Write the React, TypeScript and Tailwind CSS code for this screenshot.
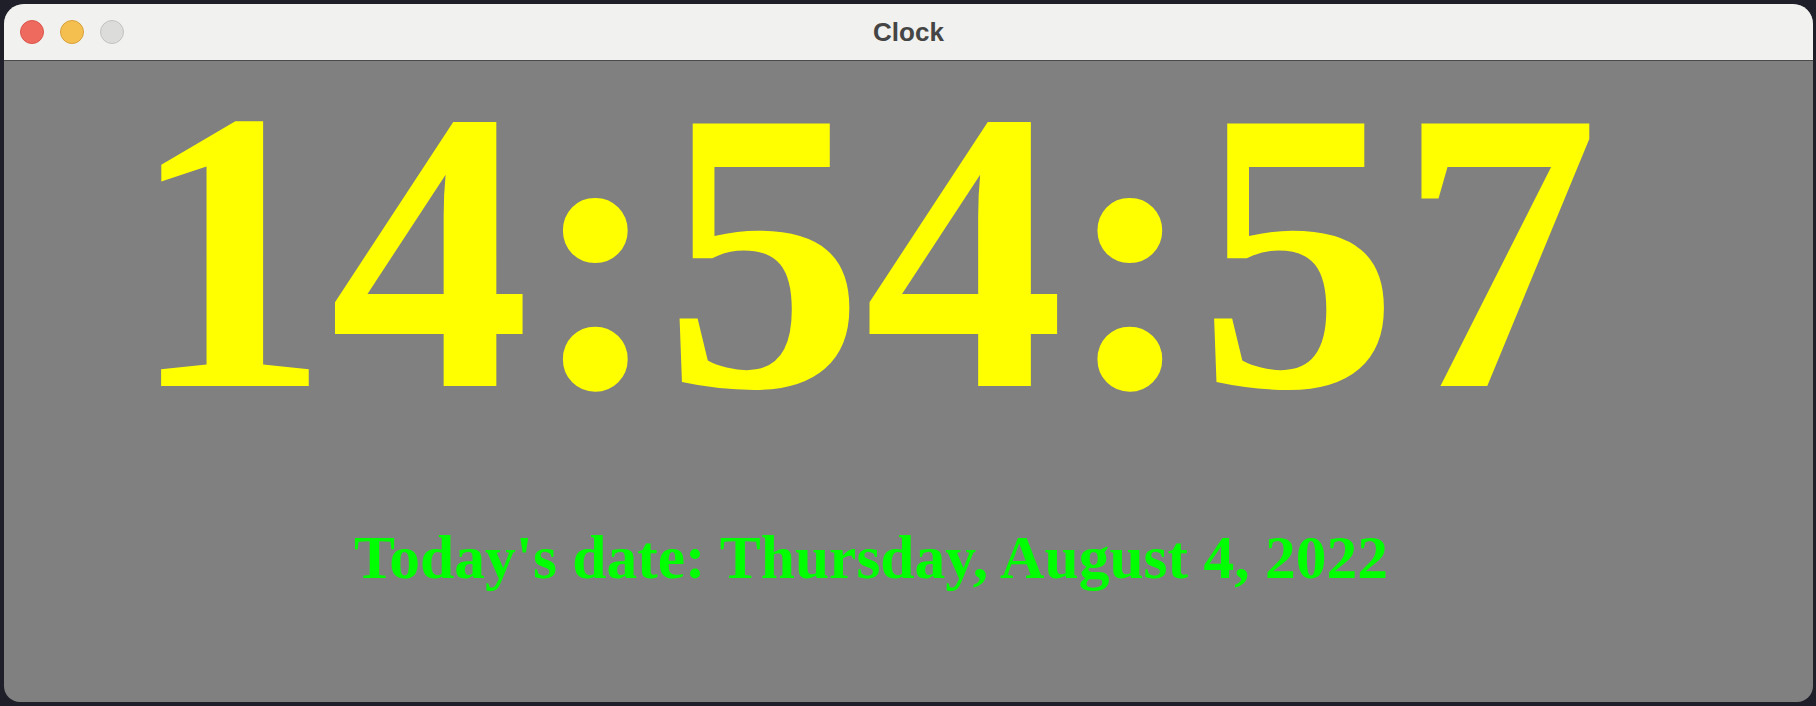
import React from "react";

export default function App() {
  return (
    <div className="w-[1816px] h-[706px] bg-[#1e1f29] pt-[4px] pl-[4px] overflow-hidden">
      <div className="w-[1809px] h-[698px] rounded-t-[20px] rounded-b-[16px] overflow-hidden flex flex-col bg-[#808080]">
        <div className="relative h-[57px] shrink-0 bg-[#f1f1ef] border-b border-[#4a4a4a] flex items-center justify-center">
          <div className="absolute left-[16px] top-[16px] flex gap-[16px]">
            <div className="w-[24px] h-[24px] rounded-full bg-[#ee6a5e] border border-[#d8574c]" />
            <div className="w-[24px] h-[24px] rounded-full bg-[#f5bf4f] border border-[#d8a13e]" />
            <div className="w-[24px] h-[24px] rounded-full bg-[#dcdcdb] border border-[#c2c2c1]" />
          </div>
          <span className="text-[26px] font-bold text-[#454545] leading-none" style={{ fontFamily: '"Liberation Sans", Arial, sans-serif' }}>
            Clock
          </span>
        </div>
        <div className="flex-1 flex flex-col items-start" style={{ fontFamily: '"Liberation Serif", "Times New Roman", serif' }}>
          <div className="ml-[125px] mt-[10px] text-[401px] leading-[0.9] font-bold text-[#ffff00] whitespace-nowrap">
            14:54:57
          </div>
          <div className="ml-[350px] mt-[95px] text-[61.5px] leading-none font-bold text-[#00ff00] whitespace-nowrap">
            Today's date: Thursday, August 4, 2022
          </div>
        </div>
      </div>
    </div>
  );
}
